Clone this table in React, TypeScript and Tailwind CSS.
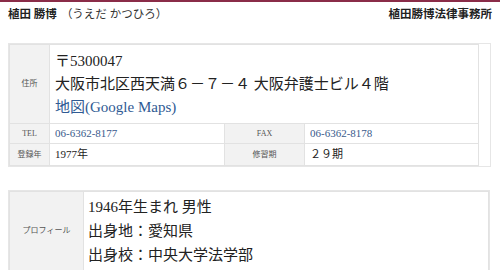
const serif = { fontFamily: "'Liberation Serif', 'Noto Sans CJK JP', serif" };

function Label({ children, className = '' }: { children: React.ReactNode; className?: string }) {
  return (
    <td className={`bg-[#f2f2f2] border border-[#e2e2e2] text-center align-middle text-[8px] text-[#555] ${className}`}>
      {children}
    </td>
  );
}

export default function App() {
  return (
    <div className="w-[500px] h-[270px] bg-white overflow-hidden text-[#222]" style={serif}>
      {/* top accent line */}
      <div className="h-[2px] bg-[#8a2c48]" />

      {/* header */}
      <div className="flex items-center justify-between px-2 h-[26px]">
        <div className="text-[11.5px]">
          <span className="font-bold">植田 勝博</span>
          <span className="ml-1 text-[#333]">（うえだ かつひろ）</span>
        </div>
        <div className="text-[11.5px] font-bold">植田勝博法律事務所</div>
      </div>

      {/* office card */}
      <div className="mx-2 mt-[15px] border border-[#e6e6e6] pr-[11px] w-[483px]">
        <table className="w-full border-collapse table-fixed">
          <colgroup>
            <col className="w-[40px]" />
            <col className="w-[175px]" />
            <col className="w-[80px]" />
            <col />
          </colgroup>
          <tbody>
            <tr className="h-[79px]">
              <Label>住所</Label>
              <td colSpan={3} className="border border-[#e2e2e2] px-[5px] text-[15px] leading-[23px]">
                <div>〒5300047</div>
                <div>大阪市北区西天満６－７－４ 大阪弁護士ビル４階</div>
                <div className="text-[#2f5a93]">地図(Google Maps)</div>
              </td>
            </tr>
            <tr className="h-[20px]">
              <Label>TEL</Label>
              <td className="border border-[#e2e2e2] px-[5px] text-[11px] text-[#3a5a8c]">06-6362-8177</td>
              <Label>FAX</Label>
              <td className="border border-[#e2e2e2] px-[5px] text-[11px] text-[#3a5a8c]">06-6362-8178</td>
            </tr>
            <tr className="h-[22px]">
              <Label>登録年</Label>
              <td className="border border-[#e2e2e2] px-[5px] text-[11px]">1977年</td>
              <Label>修習期</Label>
              <td className="border border-[#e2e2e2] px-[5px] text-[11px]">２９期</td>
            </tr>
          </tbody>
        </table>
      </div>

      {/* profile card */}
      <div className="mx-2 mt-[23px] w-[482px] border border-[#e6e6e6]">
        <table className="w-full border-collapse table-fixed">
          <colgroup>
            <col className="w-[74px]" />
            <col />
          </colgroup>
          <tbody>
            <tr className="h-[79px]">
              <Label className="text-[7px]">プロフィール</Label>
              <td className="border border-[#e2e2e2] px-[4px] text-[15px] leading-[24px]">
                <div>1946年生まれ 男性</div>
                <div>出身地：愛知県</div>
                <div>出身校：中央大学法学部</div>
              </td>
            </tr>
          </tbody>
        </table>
      </div>
    </div>
  );
}
